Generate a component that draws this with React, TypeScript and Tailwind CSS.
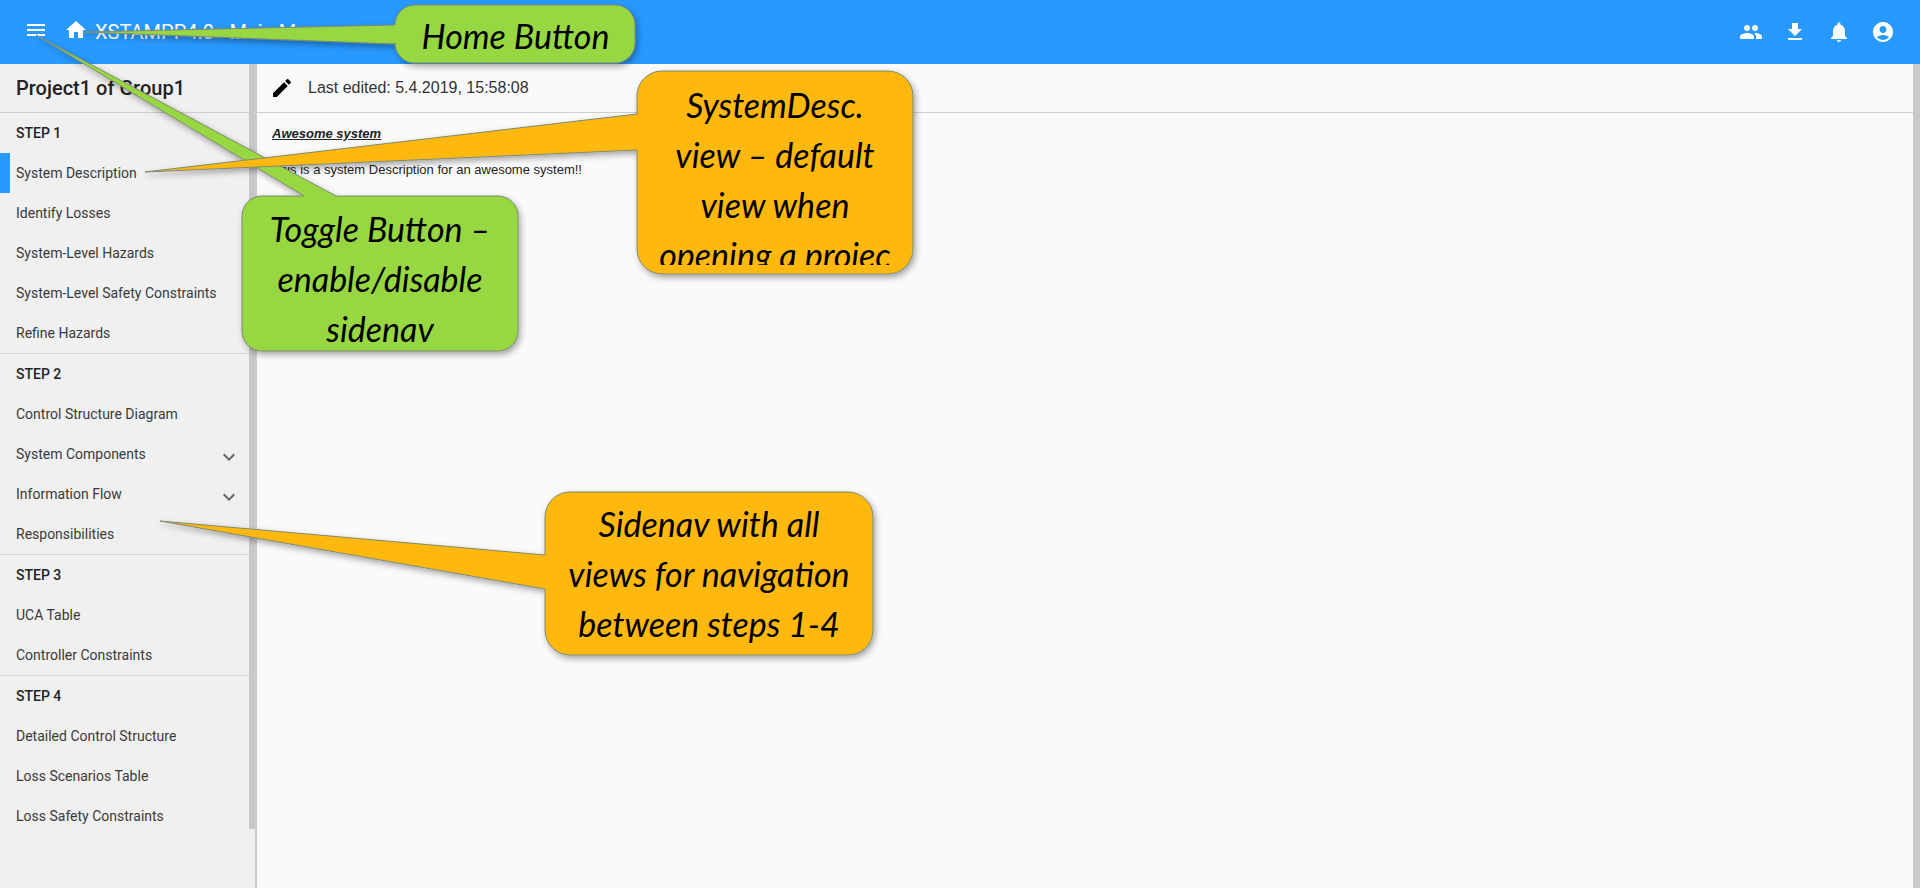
import { Fragment } from "react";
import { MdMenu, MdHome, MdPeople, MdFileDownload, MdNotifications, MdAccountCircle, MdEdit, MdExpandMore } from "react-icons/md";

const sections = [
  { title: "STEP 1", items: ["System Description", "Identify Losses", "System-Level Hazards", "System-Level Safety Constraints", "Refine Hazards"] },
  { title: "STEP 2", items: ["Control Structure Diagram", "System Components", "Information Flow", "Responsibilities"] },
  { title: "STEP 3", items: ["UCA Table", "Controller Constraints"] },
  { title: "STEP 4", items: ["Detailed Control Structure", "Loss Scenarios Table", "Loss Safety Constraints"] },
];
const expandable = ["System Components", "Information Flow"];

function Callout({ left, top, width, height, lines }: { left: number; top: number; width: number; height: number; lines: string[] }) {
  return (
    <div className="absolute flex flex-col items-center overflow-hidden font-['Lato',cursive] text-[34px] italic leading-[50px] text-black" style={{ left, top, width, height }}>
      {lines.map((l) => (
        <span key={l} className="whitespace-nowrap">{l}</span>
      ))}
    </div>
  );
}

export default function App() {
  return (
    <div className="relative h-[888px] w-[1920px] overflow-hidden bg-[#fafafa] font-['Roboto',sans-serif]">
      <header className="flex h-16 items-center bg-[#2899ff] text-white">
        <MdMenu className="ml-6 mb-1 size-6" />
        <MdHome className="ml-4 mb-1 size-6" />
        <span className="ml-[7px] text-xl">XSTAMPP4.0 - Main Menu</span>
        <div className="ml-auto mr-[25px] flex items-center gap-5">
          <MdPeople className="size-6" />
          <MdFileDownload className="size-6" />
          <MdNotifications className="size-6" />
          <MdAccountCircle className="size-6" />
        </div>
      </header>
      <div className="flex h-[824px]">
        <aside className="flex w-[257px] shrink-0 border-r-2 border-[#cccccc] bg-[#f0f0f0]">
          <div className="w-[249px] shrink-0">
            <div className="flex h-[49px] items-center border-b border-[#cfcfcf] pl-4 text-xl font-medium text-[#222]">Project1 of Group1</div>
            {sections.map((s, i) => (
              <Fragment key={s.title}>
                <div className={i ? "border-t border-[#d4d4d4]" : ""}>
                  <div className="flex h-10 items-center pl-4 text-sm font-medium text-[#222]">{s.title}</div>
                  {s.items.map((it) => (
                    <div key={it} className="relative flex h-10 items-center pl-4 text-sm text-[#3a3a3a]">
                      {it === "System Description" && <div className="absolute left-0 top-0 h-10 w-2.5 bg-[#2899ff]" />}
                      {it}
                      {expandable.includes(it) && <MdExpandMore className="absolute right-[8px] top-[11px] size-6 text-[#666]" />}
                    </div>
                  ))}
                </div>
              </Fragment>
            ))}
          </div>
          <div className="h-[765px] w-[7px] bg-[#c8c8c8]" />
        </aside>
        <main className="flex min-w-0 flex-1">
          <div className="min-w-0 flex-1">
            <div className="flex h-[49px] items-center border-b border-[#cfcfcf] pl-[13px] text-[#333]">
              <MdEdit className="size-6 text-black" />
              <span className="ml-[14px] font-['Liberation_Sans',sans-serif] text-base">Last edited: 5.4.2019, 15:58:08</span>
            </div>
            <div className="pl-[15px] pt-[11px] font-['Liberation_Sans',sans-serif] text-[13px] text-[#222]">
              <p className="font-bold italic underline">Awesome system</p>
              <p className="mt-4">This is a system Description for an awesome system!!</p>
            </div>
          </div>
          <div className="w-[7px] bg-[#cacaca]" />
        </main>
      </div>

      <svg className="pointer-events-none absolute left-0 top-0" width="1920" height="888" fill="none">
        <defs>
          <filter id="s" x="-20%" y="-20%" width="140%" height="140%">
            <feDropShadow dx="2" dy="3" stdDeviation="3" floodColor="#000" floodOpacity="0.35" />
          </filter>
        </defs>
        <g filter="url(#s)" stroke="#7f8a70" strokeWidth="1">
          <path fill="#97d842" d="M415 5H615a20 20 0 0 1 20 20V43a20 20 0 0 1-20 20H415a20 20 0 0 1-20-20V44L84 32L395 25a20 20 0 0 1 20-20Z" />
          <path fill="#97d842" d="M262 196H304L36 35L336 196H498a20 20 0 0 1 20 20V331a20 20 0 0 1-20 20H262a20 20 0 0 1-20-20V216a20 20 0 0 1 20-20Z" />
          <path fill="#ffb80d" d="M662 71H888a25 25 0 0 1 25 25V249a25 25 0 0 1-25 25H662a25 25 0 0 1-25-25V150L145 172L637 114V96a25 25 0 0 1 25-25Z" />
          <path fill="#ffb80d" d="M570 492H848a25 25 0 0 1 25 25V630a25 25 0 0 1-25 25H570a25 25 0 0 1-25-25V589L160 521L545 555V517a25 25 0 0 1 25-25Z" />
        </g>
      </svg>
      <Callout left={395} top={11} width={241} height={52} lines={["Home Button"]} />
      <Callout left={242} top={204} width={276} height={147} lines={["Toggle Button –", "enable/disable", "sidenav"]} />
      <Callout left={637} top={80} width={276} height={185} lines={["SystemDesc.", "view – default", "view when", "opening a projec"]} />
      <Callout left={545} top={499} width={328} height={156} lines={["Sidenav with all", "views for navigation", "between steps 1-4"]} />
    </div>
  );
}
